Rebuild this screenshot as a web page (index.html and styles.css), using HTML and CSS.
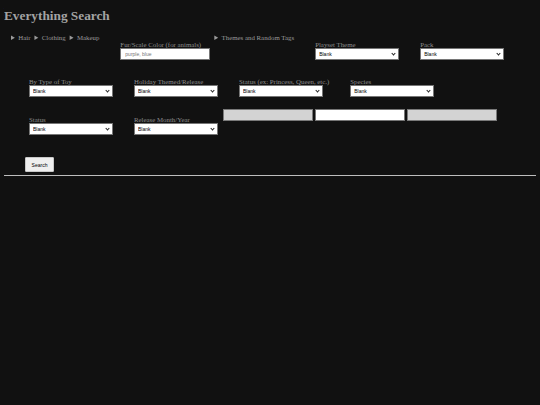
FILE: index.html
```html
<!DOCTYPE html>
<html lang="en">
<head>
<meta charset="utf-8">
<title>Everything Search</title>
<link rel="stylesheet" href="styles.css">
</head>
<body>
<h1 class="title">Everything Search</h1>
<form class="search-form">
  <div class="row row-top">
    <div class="drops">
      <details class="drop"><summary>Hair</summary></details>
      <details class="drop"><summary>Clothing</summary></details>
      <details class="drop"><summary>Makeup</summary></details>
    </div>
    <div class="field">
      <label class="label" for="fur">Fur/Scale Color (for animals)</label>
      <input class="text-input" id="fur" type="text" placeholder="purple, blue">
    </div>
    <details class="drop"><summary>Themes and Random Tags</summary></details>
    <div class="field">
      <label class="label" for="playset">Playset Theme</label>
      <span class="pick-wrap"><select class="pick" id="playset"><option>Blank</option></select></span>
    </div>
    <div class="field">
      <label class="label" for="pack">Pack</label>
      <span class="pick-wrap"><select class="pick" id="pack"><option>Blank</option></select></span>
    </div>
  </div>
  <div class="row row-mid">
    <div class="field">
      <label class="label" for="toy">By Type of Toy</label>
      <span class="pick-wrap"><select class="pick" id="toy"><option>Blank</option></select></span>
    </div>
    <div class="field">
      <label class="label" for="holiday">Holiday Themed/Release</label>
      <span class="pick-wrap"><select class="pick" id="holiday"><option>Blank</option></select></span>
    </div>
    <div class="field">
      <label class="label" for="rank">Status (ex: Princess, Queen, etc.)</label>
      <span class="pick-wrap"><select class="pick" id="rank"><option>Blank</option></select></span>
    </div>
    <div class="field">
      <label class="label" for="species">Species</label>
      <span class="pick-wrap"><select class="pick" id="species"><option>Blank</option></select></span>
    </div>
  </div>
  <div class="row row-bottom">
    <div class="field">
      <label class="label" for="status">Status</label>
      <span class="pick-wrap"><select class="pick" id="status"><option>Blank</option></select></span>
    </div>
    <div class="field">
      <label class="label" for="release">Release Month/Year</label>
      <span class="pick-wrap"><select class="pick" id="release"><option>Blank</option></select></span>
    </div>
    <div class="boxes">
      <input class="box box-gray" type="text" disabled>
      <input class="box" type="text">
      <input class="box box-gray" type="text" disabled>
    </div>
  </div>
  <div class="actions">
    <button class="search-btn" type="button">Search</button>
  </div>
</form>
<hr class="rule">
</body>
</html>
```

FILE: styles.css
```css
html {
  background: #111111;
}

body {
  margin: 4px;
  background: #111111;
  color: #8a8a8a;
  font-family: "Liberation Serif", "Times New Roman", serif;
}

.title {
  margin: 4px 0 0;
  font-size: 13.3px;
  line-height: 15px;
  font-weight: bold;
  color: #a3a3a3;
}

.search-form {
  margin: 0;
}

.row {
  display: flex;
  align-items: flex-start;
  gap: 4px;
  padding-left: 8px;
}

.row-top {
  margin-top: 11px;
}

.row-mid {
  margin-top: 11px;
}

.row-bottom {
  margin-top: 12px;
}

.drops {
  display: flex;
  gap: 4px;
  margin-left: -1px;
}

.drop {
  font-size: 6.85px;
  line-height: 7px;
  color: #9a9a9a;
  white-space: nowrap;
}

.drop summary {
  cursor: pointer;
}

.field {
  display: flex;
  flex-direction: column;
  align-items: flex-start;
  margin-left: 17px;
  margin-top: 7px;
}

.label {
  display: block;
  font-size: 6.85px;
  line-height: 7px;
  white-space: nowrap;
  color: #8c8c8c;
}

.pick-wrap {
  position: relative;
  display: block;
  width: 84px;
  height: 12px;
}

.pick-wrap::after {
  content: "";
  position: absolute;
  right: 4px;
  top: 3.5px;
  width: 2px;
  height: 2px;
  border-right: 1px solid #222222;
  border-bottom: 1px solid #222222;
  transform: rotate(45deg);
  pointer-events: none;
}

.pick {
  appearance: none;
  -webkit-appearance: none;
  box-sizing: border-box;
  display: block;
  width: 84px;
  height: 12px;
  margin: 0;
  padding: 0 0 0 3px;
  font-family: "Liberation Sans", Arial, sans-serif;
  font-size: 5px;
  color: #000000;
  background: #ffffff;
  border: 1px solid #767676;
  border-radius: 0;
}

.text-input {
  box-sizing: border-box;
  width: 90px;
  height: 12px;
  margin: 0;
  padding: 0 4px;
  font-family: "Liberation Sans", Arial, sans-serif;
  font-size: 5px;
  background: #ffffff;
  border: 1px solid #767676;
  border-radius: 0;
}

.text-input::placeholder {
  color: #757575;
}

.boxes {
  display: flex;
  gap: 2px;
  margin-left: 1px;
}

.box {
  box-sizing: border-box;
  width: 90px;
  height: 12px;
  margin: 0;
  padding: 0;
  background: #ffffff;
  border: 1px solid #767676;
  border-radius: 0;
}

.box-gray {
  background: #d3d3d3;
  border-color: #7a7a7a;
}

.actions {
  display: flex;
  padding-left: 21px;
  margin-top: 22px;
}

.search-btn {
  box-sizing: border-box;
  width: 29px;
  height: 15px;
  margin: 0;
  padding: 0;
  font-family: "Liberation Sans", Arial, sans-serif;
  font-size: 5px;
  color: #000000;
  background: #efefef;
  border: 1px solid #c8c8c8;
  border-radius: 1px;
}

.rule {
  margin: 3px 0 0;
  border: 0;
  border-top: 1px solid #bdbdbd;
  height: 0;
}
```
